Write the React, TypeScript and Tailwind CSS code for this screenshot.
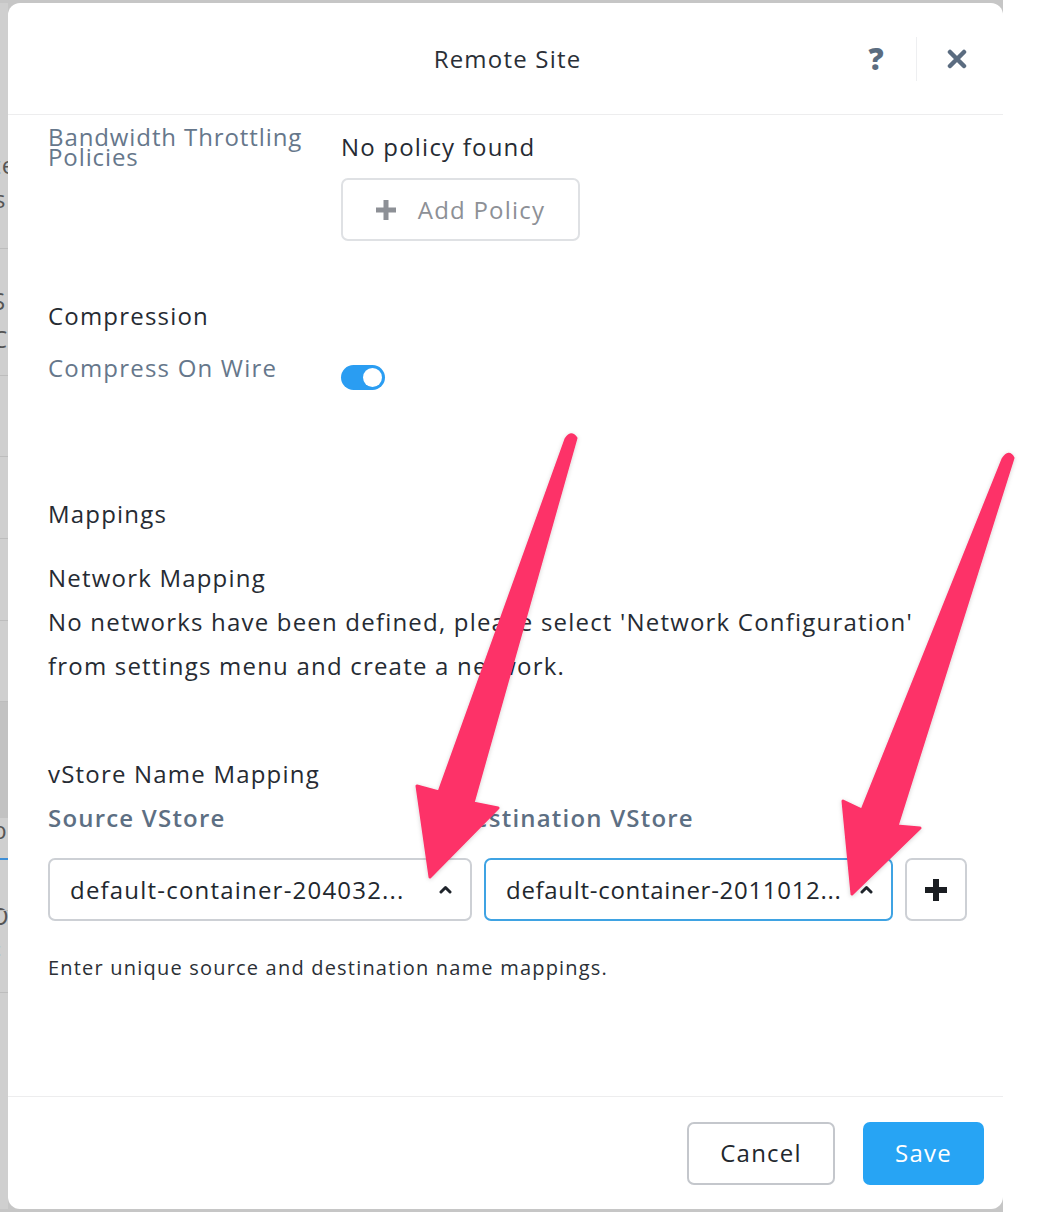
import React from 'react';

const font = { fontFamily: '"Open Sans", Lato, sans-serif' };

const ChevronUp = () => (
  <svg width="13" height="9" viewBox="0 0 13 9" fill="none">
    <path d="M2 7L6.5 2.5L11 7" stroke="#1f242b" strokeWidth="3" strokeLinecap="round" strokeLinejoin="round" />
  </svg>
);

const Plus = ({ size, color, stroke }: { size: number; color: string; stroke: number }) => (
  <svg width={size} height={size} viewBox={`0 0 ${size} ${size}`}>
    <rect x={(size - stroke) / 2} y={0} width={stroke} height={size} fill={color} />
    <rect x={0} y={(size - stroke) / 2} width={size} height={stroke} fill={color} />
  </svg>
);

// left edge of the page behind the dialog
const BackdropStrip = () => (
  <div className="w-[8px] shrink-0 overflow-hidden bg-[#cfcfcf] flex flex-col text-[24px] text-[#555] leading-[24px]">
    <div className="h-[150px]" />
    <div className="h-[34px] -ml-[8px]">te</div>
    <div className="h-[61px] -ml-[6px]">s</div>
    <div className="h-px bg-[#bdbdbd]" />
    <div className="h-[40px]" />
    <div className="h-[38px] -ml-[8px]">S</div>
    <div className="h-[48px] -ml-[8px]">C</div>
    <div className="h-px bg-[#bdbdbd]" />
    <div className="h-[80px]" />
    <div className="h-px bg-[#bdbdbd]" />
    <div className="h-[81px]" />
    <div className="h-px bg-[#bdbdbd]" />
    <div className="h-[81px]" />
    <div className="h-px bg-[#bdbdbd]" />
    <div className="h-[80px]" />
    <div className="h-px bg-[#bdbdbd]" />
    <div className="h-[82px] bg-[#c2c2c2]" />
    <div className="h-[34px] bg-[#c2c2c2]" />
    <div className="h-[40px] -ml-[8px]">bl</div>
    <div className="h-[2px] bg-[#3d8ed6]" />
    <div className="h-[50px] -ml-[10px] pt-[44px]">O</div>
    <div className="h-px bg-[#bdbdbd]" />
    <div className="h-[81px] -ml-[8px] pt-[26px] text-[18px]">c</div>
    <div className="h-px bg-[#bdbdbd]" />
  </div>
);

const Arrows = () => (
  <svg className="absolute inset-0 pointer-events-none" width="1054" height="1212" viewBox="0 0 1054 1212">
    <defs>
      <filter id="sh" x="-20%" y="-20%" width="140%" height="140%">
        <feDropShadow dx="0" dy="1" stdDeviation="2" floodColor="#000" floodOpacity="0.18" />
      </filter>
    </defs>
    <g fill="#fd3368" stroke="#fd3368" strokeWidth="3" strokeLinejoin="round" filter="url(#sh)">
      <path d="M566 439 Q571 431 576 438 L473 803 L498 808 L430 877 L417 786 L439 792 Z" />
      <path d="M1003 459 Q1009 450 1013 458 L897 826 L920 828 L852 894 L843 801 L862 810 Z" />
    </g>
  </svg>
);

export default function App() {
  return (
    <div className="relative w-[1054px] h-[1212px] bg-white overflow-hidden flex tracking-[1.2px]" style={font}>
      <div className="w-[1003px] h-full flex flex-col bg-[#c6c6c6]">
        <div className="h-[3px] shrink-0" />
        <div className="flex flex-1 min-h-0">
          <BackdropStrip />
          <div className="flex-1 bg-white rounded-[12px] flex flex-col text-[#262b33]">
            {/* header */}
            <div className="h-[112px] shrink-0 border-b border-[#ededee] flex items-center relative">
              <div className="flex-1 text-center text-[24px] text-[#2a2f37] pl-[4px]">Remote Site</div>
              <div className="absolute right-0 top-0 h-full flex items-center">
                <div className="w-[60px] text-center text-[30px] font-extrabold text-[#5b6c80] leading-none mr-[10px] tracking-normal">?</div>
                <div className="w-px h-[44px] bg-[#eeeff1]" />
                <div className="w-[86px] flex justify-center pr-[6px]">
                  <svg width="20" height="20" viewBox="0 0 20 20">
                    <path d="M3 3L17 17M17 3L3 17" stroke="#5b6c80" strokeWidth="4.5" strokeLinecap="round" />
                  </svg>
                </div>
              </div>
            </div>

            {/* body */}
            <div className="flex-1 pl-[40px] pr-[36px] pt-[10px]">
              <div className="flex">
                <div className="w-[293px] text-[24px] leading-[20px] text-[#66778b] pt-[2px] tracking-[0.9px]">
                  Bandwidth Throttling
                  <br />
                  Policies
                </div>
                <div className="flex flex-col items-start">
                  <div className="text-[24px] leading-[44px]">No policy found</div>
                  <button className="mt-[9px] w-[239px] h-[63px] border-2 border-[#dfe1e4] rounded-[7px] flex items-center justify-center gap-[22px] text-[24px] text-[#8d9096]">
                    <Plus size={20} color="#8d9096" stroke={5} />
                    <span>Add Policy</span>
                  </button>
                </div>
              </div>

              <div className="mt-[53px] text-[24px] leading-[44px]">Compression</div>
              <div className="mt-[8px] flex">
                <div className="w-[293px] text-[24px] leading-[44px] text-[#66778b]">Compress On Wire</div>
                <div className="pt-[19px]">
                  <div className="w-[44px] h-[25px] rounded-full bg-[#2a9df2] flex items-center justify-end pr-[3px]">
                    <div className="w-[19px] h-[19px] rounded-full bg-white" />
                  </div>
                </div>
              </div>

              <div className="mt-[102px] text-[24px] leading-[44px]">Mappings</div>
              <div className="mt-[20px] text-[24px] leading-[44px]">
                <div>Network Mapping</div>
                <div>No networks have been defined, please select 'Network Configuration'</div>
                <div>from settings menu and create a network.</div>
              </div>

              <div className="mt-[64px] text-[24px] leading-[44px]">vStore Name Mapping</div>
              <div className="flex text-[24px] leading-[44px] font-semibold text-[#5d6f83]">
                <div className="w-[407px]">Source VStore</div>
                <div>Destination VStore</div>
              </div>

              <div className="mt-[18px] flex gap-[12px]">
                <div className="w-[424px] h-[63px] border-2 border-[#cdd0d5] rounded-[7px] flex items-center pl-[20px] pr-[18px]">
                  <span className="flex-1 text-[24px] text-[#22272e] whitespace-nowrap">default-container-204032...</span>
                  <ChevronUp />
                </div>
                <div className="w-[409px] h-[63px] border-2 border-[#3fa3e3] rounded-[7px] flex items-center pl-[20px] pr-[18px]">
                  <span className="flex-1 text-[24px] text-[#22272e] whitespace-nowrap tracking-[0.7px]">default-container-2011012...</span>
                  <ChevronUp />
                </div>
                <button className="w-[62px] h-[63px] border-2 border-[#cdd0d5] rounded-[7px] flex items-center justify-center">
                  <Plus size={22} color="#1a1d21" stroke={6} />
                </button>
              </div>

              <div className="mt-[32px] text-[20px] leading-[30px] text-[#2b3036] tracking-[1.2px]">
                Enter unique source and destination name mappings.
              </div>
            </div>

            {/* footer */}
            <div className="border-t border-[#ededee] h-[113px] shrink-0 flex items-center justify-end gap-[28px] pr-[19px]">
              <button className="w-[148px] h-[63px] border-2 border-[#c4c7cc] rounded-[7px] text-[24px] text-[#22272e] bg-white">
                Cancel
              </button>
              <button className="w-[121px] h-[63px] rounded-[7px] text-[24px] text-white bg-[#27a4f4]">Save</button>
            </div>
          </div>
        </div>
        <div className="h-[3px] shrink-0" />
      </div>
      <Arrows />
    </div>
  );
}
